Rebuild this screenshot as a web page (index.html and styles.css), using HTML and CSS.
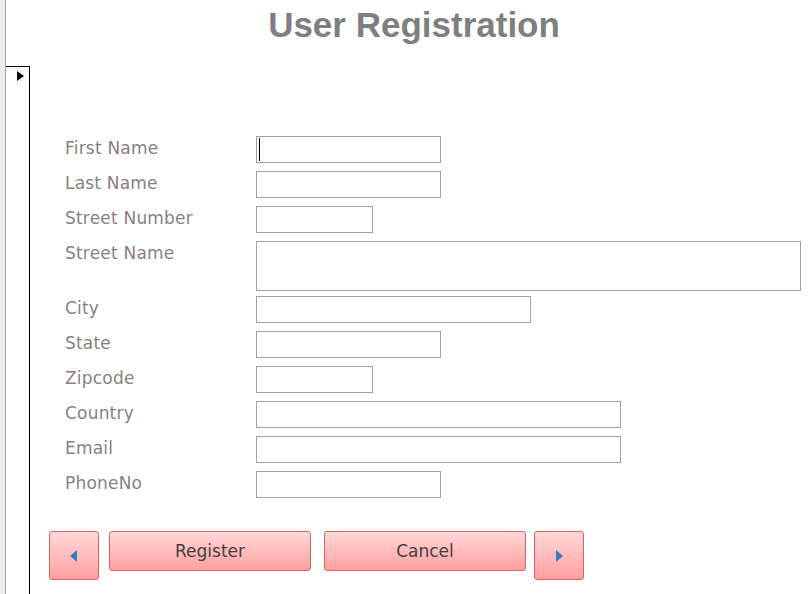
FILE: index.html
```html
<!DOCTYPE html>
<html>
<head>
<meta charset="utf-8">
<link rel="stylesheet" href="styles.css">
</head>
<body>
<div class="page">
  <div class="strip"></div>
  <div class="content">
    <header class="header"><h1 class="title">User Registration</h1></header>
    <div class="detail">
      <div class="selector"><span class="sel-arrow"></span></div>
      <div class="form">
        <div class="fields">
          <div class="row"><label class="lbl">First Name</label><div class="box w185 focused"><span class="caret"></span></div></div>
          <div class="row"><label class="lbl">Last Name</label><div class="box w185"></div></div>
          <div class="row"><label class="lbl">Street Number</label><div class="box w117"></div></div>
          <div class="row tall"><label class="lbl">Street Name</label><div class="box w546 h50"></div></div>
          <div class="row"><label class="lbl">City</label><div class="box w275"></div></div>
          <div class="row"><label class="lbl">State</label><div class="box w185"></div></div>
          <div class="row"><label class="lbl">Zipcode</label><div class="box w117"></div></div>
          <div class="row"><label class="lbl">Country</label><div class="box w365"></div></div>
          <div class="row"><label class="lbl">Email</label><div class="box w365"></div></div>
          <div class="row"><label class="lbl">PhoneNo</label><div class="box w185"></div></div>
        </div>
        <div class="buttons">
          <button class="btn nav"><svg width="8" height="12" viewBox="0 0 8 12"><path d="M7 0 L0 6 L7 12 Z" fill="#3d79b8"/></svg></button>
          <button class="btn wide gap13">Register</button>
          <button class="btn wide">Cancel</button>
          <button class="btn nav gap8"><svg width="8" height="12" viewBox="0 0 8 12"><path d="M1 0 L8 6 L1 12 Z" fill="#3d79b8"/></svg></button>
        </div>
      </div>
    </div>
  </div>
</div>
</body>
</html>
```

FILE: styles.css
```css
* { box-sizing: border-box; }
html, body { margin: 0; padding: 0; background: #fff; }
body { font-family: "DejaVu Sans", sans-serif; }
.page { display: flex; width: 808px; height: 594px; overflow: hidden; }
.strip { width: 6px; background: #eeeef0; border-right: 1px solid #a0a0a0; flex: none; }
.content { flex: 1; display: flex; flex-direction: column; }
.header { height: 66px; display: flex; justify-content: center; padding-left: 14px; }
.title { margin: 0; padding-top: 4px; font-family: "Liberation Sans", sans-serif; font-weight: bold; font-size: 35px; line-height: 42px; color: #7f7f7f; letter-spacing: 0; }
.detail { flex: 1; display: flex; }
.selector { width: 24px; flex: none; border-top: 1px solid #000; border-right: 1px solid #000; position: relative; }
.sel-arrow { position: absolute; left: 11px; top: 4px; width: 0; height: 0; border-top: 5.5px solid transparent; border-bottom: 5.5px solid transparent; border-left: 7px solid #000; }
.form { flex: 1; padding: 70px 0 0 19px; }
.fields { padding-left: 16px; }
.row { display: flex; height: 35px; }
.row.tall { height: 55px; }
.lbl { width: 191px; flex: none; font-size: 17px; line-height: 20px; padding-top: 2px; color: #8a8080; letter-spacing: 0.2px; }
.box { height: 27px; border: 1px solid #a0a0a0; background: #fff; position: relative; }
.w185 { width: 185px; }
.w117 { width: 117px; }
.w275 { width: 275px; }
.w365 { width: 365px; }
.w546 { width: 545px; }
.h50 { height: 50px; }
.caret { position: absolute; left: 2px; top: 1px; width: 1px; height: 23px; background: #000; }
.buttons { display: flex; align-items: flex-start; margin-top: 25px; gap: 10px; }
.btn { margin: 0; padding: 0; border: 1px solid #e45f5f; border-radius: 3px; background: linear-gradient(#ffd9d9, #ff9f9f); font-family: "DejaVu Sans", sans-serif; font-size: 17px; color: #404040; display: flex; align-items: center; justify-content: center; }
.nav { width: 50px; height: 49px; }
.wide { width: 202px; height: 40px; }
.gap13 { margin-right: 3px; }
.gap8 { margin-left: -2px; }
```
